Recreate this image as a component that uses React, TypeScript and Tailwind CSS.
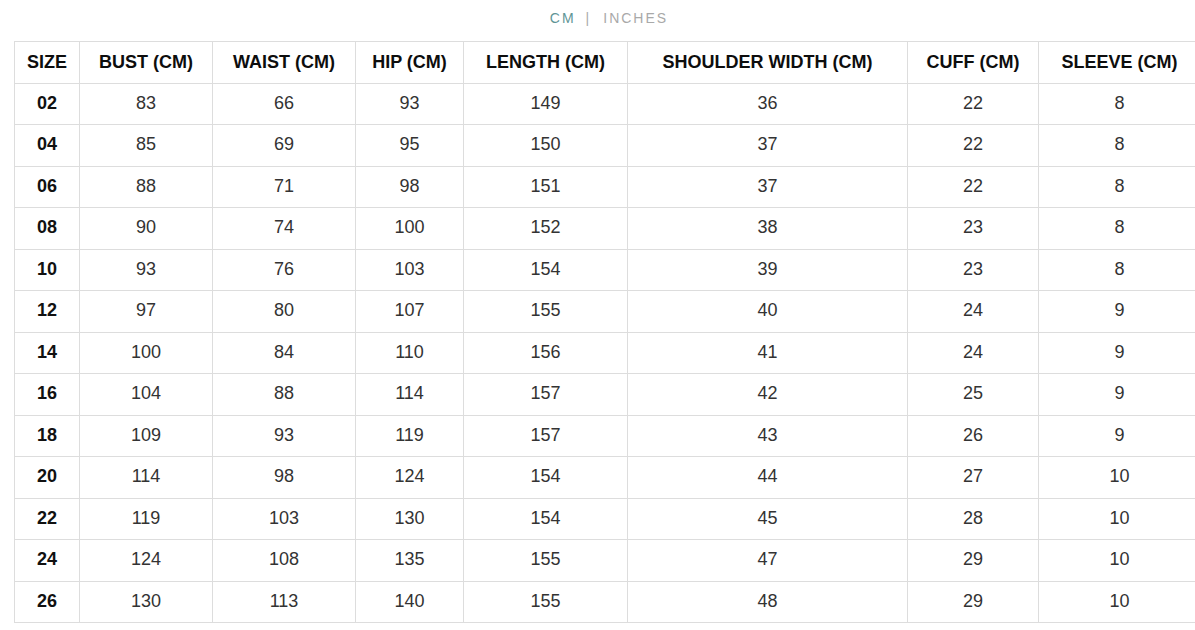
import React from 'react';

const headers = [
  'SIZE',
  'BUST (CM)',
  'WAIST (CM)',
  'HIP (CM)',
  'LENGTH (CM)',
  'SHOULDER WIDTH (CM)',
  'CUFF (CM)',
  'SLEEVE (CM)',
];

const widths = [65, 133, 143, 108, 164, 280, 131, 162];

const rows: string[][] = [
  ['02', '83', '66', '93', '149', '36', '22', '8'],
  ['04', '85', '69', '95', '150', '37', '22', '8'],
  ['06', '88', '71', '98', '151', '37', '22', '8'],
  ['08', '90', '74', '100', '152', '38', '23', '8'],
  ['10', '93', '76', '103', '154', '39', '23', '8'],
  ['12', '97', '80', '107', '155', '40', '24', '9'],
  ['14', '100', '84', '110', '156', '41', '24', '9'],
  ['16', '104', '88', '114', '157', '42', '25', '9'],
  ['18', '109', '93', '119', '157', '43', '26', '9'],
  ['20', '114', '98', '124', '154', '44', '27', '10'],
  ['22', '119', '103', '130', '154', '45', '28', '10'],
  ['24', '124', '108', '135', '155', '47', '29', '10'],
  ['26', '130', '113', '140', '155', '48', '29', '10'],
];

const App: React.FC = () => {
  return (
    <div className="w-[1195px] h-[630px] overflow-hidden bg-white font-['Liberation_Sans',Arial,sans-serif]">
      <div className="pl-[14px] w-[1200px]">
        <div className="h-[41px] flex items-center justify-center text-[14px] tracking-[2px] pb-[5px] pl-[4px]">
          <span className="text-[#5f9596]">CM</span>
          <span className="ml-[10px] mr-[12px] text-[#aaaaaa]">|</span>
          <span className="text-[#a9a9a9]">INCHES</span>
        </div>
        <table className="border-collapse table-fixed w-[1186px] text-[18px]">
          <colgroup>
            {widths.map((w, i) => (
              <col key={i} style={{ width: w }} />
            ))}
          </colgroup>
          <thead>
            <tr className="h-[41.5px]">
              {headers.map((h) => (
                <th
                  key={h}
                  className="border border-[#dddddd] font-bold text-[#0d0d0d] text-center p-0 whitespace-nowrap"
                >
                  {h}
                </th>
              ))}
            </tr>
          </thead>
          <tbody>
            {rows.map((r) => (
              <tr key={r[0]} className="h-[41.5px]">
                {r.map((c, i) => (
                  <td
                    key={i}
                    className={
                      i === 0
                        ? 'border border-[#dddddd] text-center p-0 pb-[1px] font-bold text-[#111111]'
                        : 'border border-[#dddddd] text-center p-0 pb-[1px] text-[#333333]'
                    }
                  >
                    {c}
                  </td>
                ))}
              </tr>
            ))}
          </tbody>
        </table>
      </div>
    </div>
  );
};

export default App;
